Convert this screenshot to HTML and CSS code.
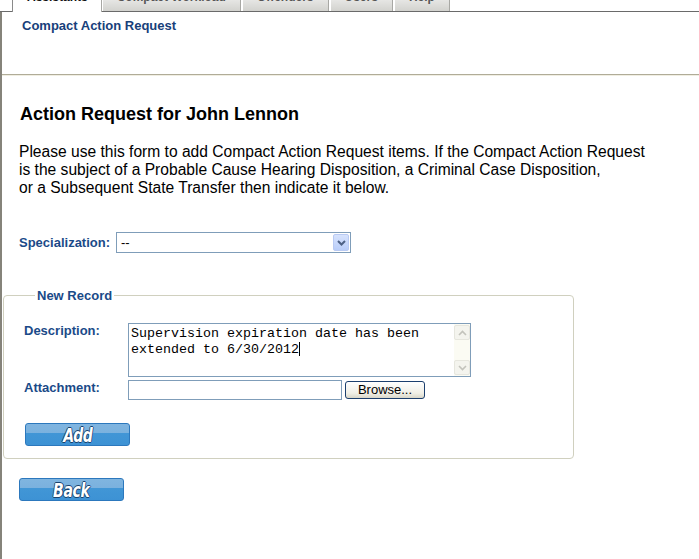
FILE: index.html
```html
<!DOCTYPE html>
<html>
<head>
<meta charset="utf-8">
<title>Compact Action Request</title>
<link rel="stylesheet" href="styles.css">
</head>
<body>
<div class="tabs">
  <div class="tab-lead"></div>
  <div class="tab active">Assistants</div>
  <div class="tab">Compact Workload</div>
  <div class="tab">Offenders</div>
  <div class="tab">Users</div>
  <div class="tab">Help</div>
</div>
<div class="frame">
  <div class="header">
    <div class="subtitle">Compact Action Request</div>
  </div>
  <div class="content">
    <h1 class="title">Action Request for John Lennon</h1>
    <p class="intro">Please use this form to add Compact Action Request items. If the Compact Action Request<br>is the subject of a Probable Cause Hearing Disposition, a Criminal Case Disposition,<br>or a Subsequent State Transfer then indicate it below.</p>
    <div class="spec-row">
      <span class="label">Specialization:</span>
      <div class="select">
        <span class="select-text">--</span>
        <span class="select-arrow"><svg width="9" height="6" viewBox="0 0 9 6"><path d="M1 1 L4.5 4.5 L8 1" fill="none" stroke="#4d6185" stroke-width="2"/></svg></span>
      </div>
    </div>
    <fieldset class="record">
      <legend class="legend">New Record</legend>
      <div class="form-grid">
        <span class="label">Description:</span>
        <div class="textarea">
          <div class="ta-text">Supervision expiration date has been<br>extended to 6/30/2012<span class="caret"></span></div>
          <div class="ta-scroll">
            <span class="sb-btn"><svg width="9" height="6" viewBox="0 0 9 6"><path d="M1 5 L4.5 1.5 L8 5" fill="none" stroke="#c3c3bc" stroke-width="1.6"/></svg></span>
            <span class="sb-track"></span>
            <span class="sb-btn"><svg width="9" height="6" viewBox="0 0 9 6"><path d="M1 1 L4.5 4.5 L8 1" fill="none" stroke="#c3c3bc" stroke-width="1.6"/></svg></span>
          </div>
        </div>
        <span class="label">Attachment:</span>
        <div class="file-row">
          <div class="file-input"></div>
          <div class="browse">Browse...</div>
        </div>
      </div>
      <div class="btn btn-add"><span class="btn-text">Add</span></div>
    </fieldset>
    <div class="btn btn-back"><span class="btn-text">Back</span></div>
  </div>
</div>
</body>
</html>
```

FILE: styles.css
```css
html, body {
  margin: 0;
  padding: 0;
  background: #ffffff;
  font-family: "Liberation Sans", Arial, sans-serif;
}

.tabs {
  display: flex;
  align-items: flex-end;
  height: 11px;
  border-bottom: 1px solid #6a6a6a;
}

.tab-lead {
  width: 12px;
}

.tab {
  height: 11px;
  box-sizing: border-box;
  padding: 0 14px 7px 14px;
  margin-right: 2px;
  display: flex;
  align-items: flex-end;
  overflow: hidden;
  font-size: 12px;
  font-weight: bold;
  line-height: 14px;
  color: #555555;
  background: linear-gradient(#e6e6e4, #d2d2ce);
  border-right: 1px solid #a8a8a4;
  white-space: nowrap;
}

.tab.active {
  height: 12px;
  margin-bottom: -1px;
  padding: 0 13px 8px 14px;
  background: #ffffff;
  color: #111111;
  border-left: 1px solid #8a8a8a;
  border-right: 1px solid #a8a8a4;
  margin-right: 1px;
}

.frame {
  border-left: 2px solid #85837a;
  min-height: calc(100vh - 12px);
  box-sizing: border-box;
}

.header {
  height: 63px;
  box-sizing: border-box;
  padding: 6px 0 0 20px;
  border-bottom: 1px solid #b0ac98;
  box-shadow: 0 1px 0 #f0eee2;
}

.subtitle {
  font-size: 13px;
  font-weight: bold;
  line-height: 15px;
  color: #17407a;
}

.content {
  padding: 0 0 0 17px;
}

.title {
  margin: 28px 0 0 1px;
  font-size: 18px;
  line-height: 22px;
  font-weight: bold;
  color: #000000;
}

.intro {
  margin: 18px 0 0 0;
  font-size: 15.6px;
  line-height: 18px;
  color: #000000;
}

.label {
  font-size: 13px;
  font-weight: bold;
  line-height: 15px;
  color: #1a4a88;
}

.spec-row {
  display: flex;
  align-items: center;
  gap: 6px;
  margin-top: 35px;
}

.select {
  width: 235px;
  height: 21px;
  box-sizing: border-box;
  border: 1px solid #7f9db9;
  display: flex;
  align-items: center;
  justify-content: space-between;
  padding: 0 1px 0 4px;
  background: #ffffff;
}

.select-text {
  font-size: 13px;
  color: #000;
}

.select-arrow {
  width: 16px;
  height: 17px;
  box-sizing: border-box;
  border: 1px solid #b9caf3;
  border-radius: 2px;
  background: linear-gradient(#d7e3fd, #b9cdf9);
  display: flex;
  align-items: center;
  justify-content: center;
}

.record {
  margin: 35px 0 0 -16px;
  width: 571px;
  box-sizing: border-box;
  border: 1px solid #d0d0bf;
  border-radius: 4px;
  padding: 0 0 12px 20px;
}

.legend {
  margin-left: 11px;
  padding: 0 2px;
  font-size: 13px;
  font-weight: bold;
  line-height: 15px;
  color: #1a4a88;
}

.form-grid {
  display: grid;
  grid-template-columns: 104px auto;
  row-gap: 3px;
  align-items: start;
  margin-top: 20px;
  justify-content: start;
}

.textarea {
  width: 343px;
  height: 54px;
  box-sizing: border-box;
  border: 1px solid #7f9db9;
  display: flex;
  justify-content: space-between;
}

.ta-text {
  padding: 2px 0 0 2px;
  font-family: "Liberation Mono", "Courier New", monospace;
  font-size: 13.33px;
  line-height: 16px;
  color: #000;
  white-space: nowrap;
}

.caret {
  display: inline-block;
  width: 1px;
  height: 14px;
  background: #000;
  vertical-align: -3px;
}

.ta-scroll {
  width: 16px;
  display: flex;
  flex-direction: column;
  background: #fbfbf3;
  padding: 1px 0 1px 0;
}

.sb-btn {
  height: 15px;
  box-sizing: border-box;
  border: 1px solid #e6e6de;
  border-radius: 2px;
  background: #f4f4ee;
  display: flex;
  align-items: center;
  justify-content: center;
}

.sb-track {
  flex: 1;
}

.file-row {
  display: flex;
  align-items: center;
  gap: 3px;
}

.file-input {
  width: 214px;
  height: 20px;
  box-sizing: border-box;
  border: 1px solid #7f9db9;
}

.browse {
  width: 80px;
  height: 18px;
  box-sizing: border-box;
  border: 1px solid #1c3f6e;
  border-radius: 3px;
  background: linear-gradient(#ffffff, #f0efe6 70%, #d8d6c8);
  font-size: 13px;
  line-height: 16px;
  text-align: center;
  color: #000;
}

.btn {
  width: 105px;
  height: 23px;
  box-sizing: border-box;
  border: 1px solid #2c78bd;
  border-radius: 3px;
  background: linear-gradient(#80b5e0 0, #7ab1de 45%, #4196d6 45%, #3d92d4 100%);
  display: flex;
  align-items: center;
  justify-content: center;
}

.btn-add {
  margin: 23px 0 0 1px;
}

.btn-back {
  margin: 19px 0 0 0;
}

.btn-text {
  display: inline-block;
  font-family: "DejaVu Sans Condensed", "DejaVu Sans", sans-serif;
  font-weight: bold;
  font-style: italic;
  font-size: 20px;
  line-height: 20px;
  color: #ffffff;
  letter-spacing: -0.5px;
  transform: scaleX(0.78);
  text-shadow: 1px 0 0 #17426e, -1px 0 0 #17426e, 0 1px 0 #17426e, 0 -1px 0 #17426e;
}
```
